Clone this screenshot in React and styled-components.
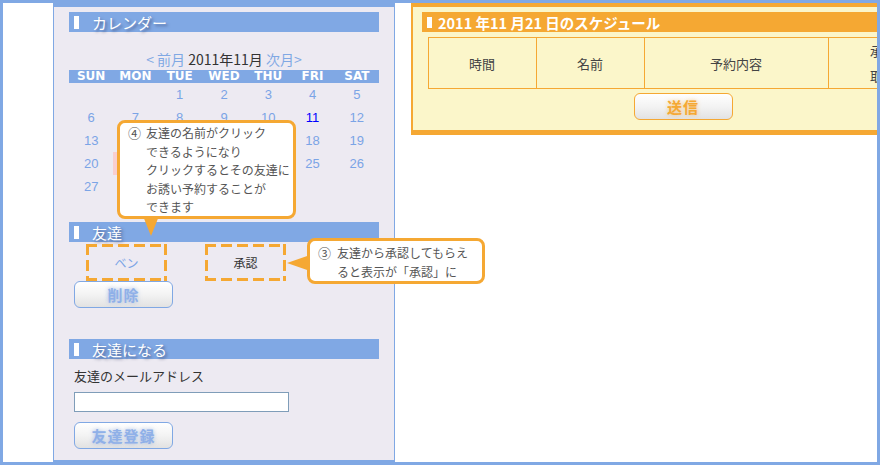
import React from "react";
import styled, { createGlobalStyle } from "styled-components";

const BLUE = "#80a8e4";
const ORANGE = "#f5a833";

const GlobalStyle = createGlobalStyle`
  body {
    margin: 0;
    font-family: "Liberation Sans", "Noto Sans CJK JP", sans-serif;
    background: #fff;
  }
`;

const Frame = styled.div`
  width: 880px;
  height: 465px;
  box-sizing: border-box;
  border: 3px solid ${BLUE};
  background: #fff;
  overflow: hidden;
  display: flex;
  align-items: flex-start;
  gap: 16px;
  padding-left: 50px;
`;

const LeftPanel = styled.div`
  position: relative;
  flex: none;
  width: 342px;
  height: 459px;
  box-sizing: border-box;
  background: #edeaf2;
  border: 1px solid ${BLUE};
  border-top-width: 4px;
  border-bottom-width: 2px;
  padding: 5px 15px 0;
`;

const RightPanel = styled.div`
  flex: none;
  width: 542px;
  box-sizing: border-box;
  background: #fbf6ca;
  border: 2px solid ${ORANGE};
  border-top-width: 4px;
  border-bottom-width: 5px;
  border-right: none;
  padding: 5px 9px 10px;
  display: flex;
  flex-direction: column;
  align-items: center;
`;

const Heading = styled.div`
  align-self: stretch;
  height: 20px;
  margin-top: ${(p) => p.$top || 0}px;
  background: ${(p) => (p.$tone === "orange" ? ORANGE : BLUE)};
  display: flex;
  align-items: center;
  gap: ${(p) => (p.$tone === "orange" ? 6 : 13)}px;
  padding-left: 5px;
  color: #fff;
  font-family: "Noto Sans CJK JP", sans-serif;
  font-size: ${(p) => (p.$tone === "orange" ? 14.5 : 15)}px;
  font-weight: ${(p) => (p.$tone === "orange" ? 700 : 400)};
  text-shadow: ${(p) =>
    p.$tone === "orange" ? "none" : "2px 2px 3px rgba(40, 50, 90, 0.55)"};
  white-space: nowrap;
`;

const Marker = styled.span`
  width: 5px;
  height: ${(p) => p.$h || 13}px;
  background: #fff;
  flex: none;
`;

const CalNav = styled.div`
  margin-top: 18px;
  height: 18px;
  line-height: 18px;
  text-align: center;
  font-size: 14px;
  color: #333;
  font-family: "Noto Sans CJK JP", sans-serif;
`;

const NavLink = styled.span`
  color: ${BLUE};
`;

const Grid = styled.div`
  display: grid;
  grid-template-columns: repeat(7, 1fr);
`;

const DayHead = styled(Grid)`
  margin-top: 2px;
  height: 13px;
  background: ${BLUE};
  color: #fff;
  font-family: "DejaVu Sans", sans-serif;
  font-weight: 700;
  font-size: 12px;
  line-height: 13px;
  text-align: center;
`;

const DayCell = styled.div`
  height: 23px;
  line-height: 23px;
  text-align: center;
  font-size: 13px;
  color: ${(p) => (p.$today ? "#0000ff" : "#7ba4e6")};
  background: ${(p) => (p.$picked ? "#f9cfcf" : "transparent")};
`;

const FriendRow = styled.div`
  margin-top: 2px;
  display: flex;
  gap: 38px;
  padding-left: 17px;
`;

const dash = (deg) =>
  `repeating-linear-gradient(${deg}deg, ${ORANGE} 0 11px, transparent 11px 16px)`;

const DashedCell = styled.div`
  width: 81px;
  height: 37px;
  display: flex;
  align-items: center;
  justify-content: center;
  font-family: "Noto Sans CJK JP", sans-serif;
  font-size: 12px;
  color: ${(p) => (p.$link ? "#7ba4e6" : "#333")};
  background:
    ${dash(90)} left top / 100% 3px no-repeat,
    ${dash(90)} left bottom / 100% 3px no-repeat,
    ${dash(180)} left top / 3px 100% no-repeat,
    ${dash(180)} right top / 3px 100% no-repeat;
`;

const GlowButton = styled.button`
  display: block;
  width: 99px;
  height: 27px;
  margin: ${(p) => p.$margin || "0"};
  box-sizing: border-box;
  border: 1px solid ${(p) => (p.$tone === "orange" ? ORANGE : BLUE)};
  border-radius: 6px;
  background: linear-gradient(#ffffff, #f3f3f3 50%, #e2e2e2);
  color: ${(p) => (p.$tone === "orange" ? ORANGE : "#8fb0e8")};
  font-family: "Noto Sans CJK JP", sans-serif;
  font-size: 15px;
  font-weight: 700;
  letter-spacing: 1px;
  text-shadow: 0 0 4px
    ${(p) => (p.$tone === "orange" ? "rgba(245,168,51,0.6)" : "rgba(110,150,220,0.6)")};
  padding: 0;
`;

const Label = styled.div`
  margin: 8px 0 0 5px;
  line-height: 18px;
  font-family: "Noto Sans CJK JP", sans-serif;
  font-size: 13px;
  color: #333;
`;

const EmailInput = styled.input`
  display: block;
  margin: 7px 0 0 5px;
  width: 215px;
  height: 20px;
  box-sizing: border-box;
  border: 1px solid #7f9db9;
  background: #fff;
`;

const Callout = styled.div`
  position: absolute;
  z-index: 2;
  left: ${(p) => p.$left}px;
  top: ${(p) => p.$top}px;
  width: ${(p) => p.$w}px;
  height: ${(p) => p.$h}px;
  box-sizing: border-box;
  background: #fff;
  border: 3px solid ${ORANGE};
  border-radius: 8px;
  padding: ${(p) => p.$pad};
  display: flex;
  font-family: "Noto Sans CJK JP", sans-serif;
  font-size: 12px;
  line-height: ${(p) => p.$lh}px;
  color: #555;
  white-space: nowrap;
`;

const TailDown = styled.span`
  position: absolute;
  top: 100%;
  left: ${(p) => p.$x}px;
  border-left: 8px solid transparent;
  border-right: 8px solid transparent;
  border-top: 20px solid ${ORANGE};
`;

const TailLeft = styled.span`
  position: absolute;
  right: 100%;
  top: ${(p) => p.$y}px;
  border-top: 8px solid transparent;
  border-bottom: 8px solid transparent;
  border-right: 23px solid ${ORANGE};
`;

const Num = styled.span`
  flex: none;
  width: ${(p) => p.$w}px;
  font-size: 13px;
`;

const Table = styled.table`
  margin-top: 5px;
  border-collapse: collapse;
  width: 510px;
  table-layout: fixed;
  font-family: "Noto Sans CJK JP", sans-serif;
  font-size: 13px;
  color: #444;
  td {
    border: 1px solid ${ORANGE};
    height: 49px;
    padding: 0;
    text-align: center;
    vertical-align: middle;
  }
  .last {
    line-height: 25px;
  }
`;

const weekDays = ["SUN", "MON", "TUE", "WED", "THU", "FRI", "SAT"];
const days = [null, null, ...Array.from({ length: 30 }, (_, i) => i + 1)];

export default function App() {
  return (
    <>
      <GlobalStyle />
      <Frame>
        <LeftPanel>
          <Heading>
            <Marker />
            カレンダー
          </Heading>
          <CalNav>
            <NavLink>&lt; 前月</NavLink> 2011年11月 <NavLink>次月&gt;</NavLink>
          </CalNav>
          <DayHead>
            {weekDays.map((d) => (
              <span key={d}>{d}</span>
            ))}
          </DayHead>
          <Grid>
            {days.map((d, i) => (
              <DayCell key={i} $today={d === 11} $picked={d === 21}>
                {d}
              </DayCell>
            ))}
          </Grid>

          <Heading $top={24}>
            <Marker />
            友達
          </Heading>
          <FriendRow>
            <DashedCell $link>ベン</DashedCell>
            <DashedCell>承認</DashedCell>
          </FriendRow>
          <GlowButton $margin="0 0 0 5px">削除</GlowButton>

          <Heading $top={31}>
            <Marker />
            友達になる
          </Heading>
          <Label>友達のメールアドレス</Label>
          <EmailInput type="text" />
          <GlowButton $margin="10px 0 0 5px">友達登録</GlowButton>

          <Callout $left={63} $top={113} $w={179} $h={99} $pad="1px 8px" $lh={18.6}>
            <Num $w={18}>④</Num>
            <div>
              友達の名前がクリック
              <br />
              できるようになり
              <br />
              クリックするとその友達に
              <br />
              お誘い予約することが
              <br />
              できます
            </div>
            <TailDown $x={23} />
          </Callout>

          <Callout $left={253} $top={231} $w={178} $h={46} $pad="2px 8px" $lh={19}>
            <Num $w={19}>③</Num>
            <div>
              友達から承認してもらえ
              <br />
              ると表示が「承認」に
            </div>
            <TailLeft $y={14} />
          </Callout>
        </LeftPanel>

        <RightPanel>
          <Heading $tone="orange">
            <Marker $h={11} />
            2011 年11 月21 日のスケジュール
          </Heading>
          <Table>
            <colgroup>
              <col style={{ width: 108 }} />
              <col style={{ width: 108 }} />
              <col style={{ width: 184 }} />
              <col style={{ width: 110 }} />
            </colgroup>
            <tbody>
              <tr>
                <td>時間</td>
                <td>名前</td>
                <td>予約内容</td>
                <td className="last">
                  承認
                  <br />
                  取消
                </td>
              </tr>
            </tbody>
          </Table>
          <GlowButton $tone="orange" $margin="4px 0 0">
            送信
          </GlowButton>
        </RightPanel>
      </Frame>
    </>
  );
}
